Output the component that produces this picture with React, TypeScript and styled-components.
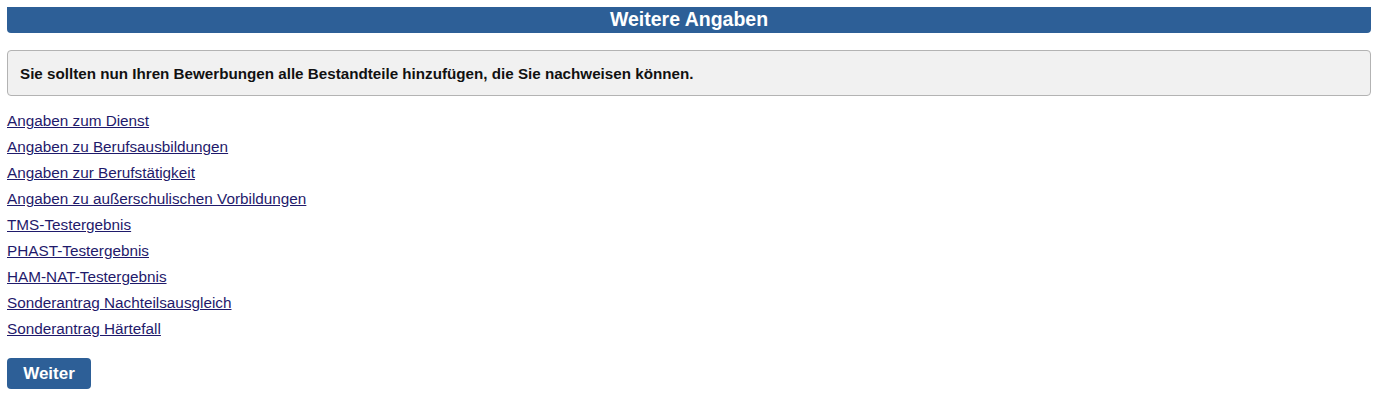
import React from 'react';
import styled, { createGlobalStyle } from 'styled-components';

const GlobalStyle = createGlobalStyle`
  body {
    margin: 0;
    background: #ffffff;
    font-family: 'Liberation Sans', Arial, sans-serif;
  }
`;

const links = [
  'Angaben zum Dienst',
  'Angaben zu Berufsausbildungen',
  'Angaben zur Berufstätigkeit',
  'Angaben zu außerschulischen Vorbildungen',
  'TMS-Testergebnis',
  'PHAST-Testergebnis',
  'HAM-NAT-Testergebnis',
  'Sonderantrag Nachteilsausgleich',
  'Sonderantrag Härtefall',
];

const App: React.FC = () => {
  return (
    <>
      <GlobalStyle />
      <Page>
        <Header>Weitere Angaben</Header>
        <InfoBox>
          Sie sollten nun Ihren Bewerbungen alle Bestandteile hinzufügen, die Sie nachweisen können.
        </InfoBox>
        <LinkList>
          {links.map((label) => (
            <li key={label}>
              <NavLink href="#">{label}</NavLink>
            </li>
          ))}
        </LinkList>
        <NextButton type="button">Weiter</NextButton>
      </Page>
    </>
  );
};

const Page = styled.div`
  padding: 7px 8px 7px 7px;
  display: flex;
  flex-direction: column;
  align-items: stretch;
`;

const Header = styled.h2`
  margin: 0;
  height: 26px;
  line-height: 24px;
  background-color: #2d5f97;
  color: #ffffff;
  font-size: 19.5px;
  font-weight: bold;
  text-align: center;
  border-radius: 0 0 4px 4px;
`;

const InfoBox = styled.div`
  margin-top: 17px;
  height: 46px;
  box-sizing: border-box;
  display: flex;
  align-items: center;
  padding: 0 12px;
  background-color: #f1f1f1;
  border: 1px solid #b3b3b3;
  border-radius: 4px;
  font-size: 15.2px;
  font-weight: bold;
  color: #111111;
`;

const LinkList = styled.ul`
  list-style: none;
  margin: 12px 0 0;
  padding: 0;

  li {
    height: 26px;
    line-height: 26px;
  }
`;

const NavLink = styled.a`
  font-size: 15.3px;
  color: #1f1a6b;
  text-decoration: underline;
`;

const NextButton = styled.button`
  align-self: flex-start;
  margin-top: 16px;
  width: 84px;
  height: 31px;
  border: none;
  border-radius: 4px;
  background-color: #2d5f97;
  color: #ffffff;
  font-family: 'Liberation Sans', Arial, sans-serif;
  font-size: 17px;
  font-weight: bold;
  cursor: pointer;
`;

export default App;
